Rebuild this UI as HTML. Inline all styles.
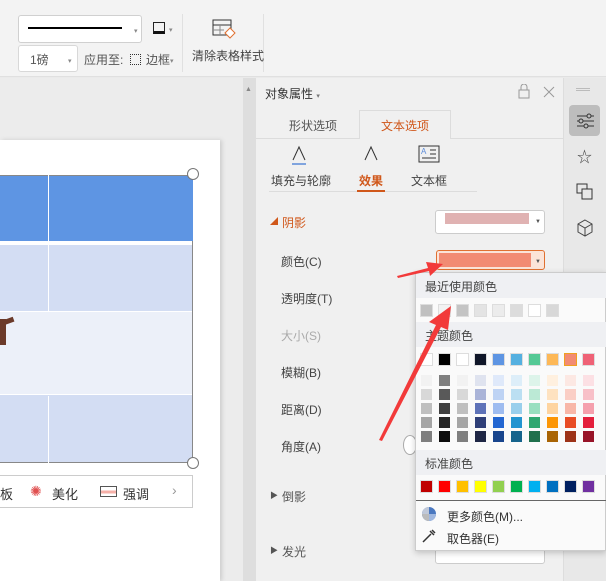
<!DOCTYPE html>
<html><head><meta charset="utf-8"><style>
*{margin:0;padding:0;box-sizing:border-box}
body{width:606px;height:581px;overflow:hidden;position:relative;background:#eaeaea;font-family:"Liberation Sans","Noto Sans CJK SC",sans-serif;font-size:12px;color:#333}
.a{position:absolute}
.sw{position:absolute;width:13px;height:13px;border:1px solid #ddd}
</style></head><body>
<div class="a" style="left:0;top:0;width:606px;height:77px;background:#f3f3f3;border-bottom:1px solid #e0e0e0"></div>
<div class="a" style="left:18px;top:15px;width:124px;height:28px;background:#fff;border:1px solid #d0d0d0;border-radius:3px"></div>
<div class="a" style="left:28px;top:27px;width:94px;height:2px;background:#000"></div>
<div class="a" style="left:134px;top:27px;font-size:7px;color:#888">▾</div>
<div class="a" style="left:153px;top:22px;width:12px;height:12px;border:1.5px solid #222;border-bottom:3px solid #111"></div>
<div class="a" style="left:169px;top:26px;font-size:7px;color:#888">▾</div>
<div class="a" style="left:18px;top:45px;width:60px;height:27px;background:#fff;border:1px solid #d8d8d8;border-radius:3px"></div>
<div class="a" style="left:30px;top:51px;color:#555">1磅</div>
<div class="a" style="left:68px;top:57px;font-size:7px;color:#888">▾</div>
<div class="a" style="left:84px;top:51px;color:#555">应用至:</div>
<div class="a" style="left:130px;top:54px;width:11px;height:11px;border:1px dotted #333"></div>
<div class="a" style="left:146px;top:51px;color:#555">边框</div>
<div class="a" style="left:170px;top:57px;font-size:7px;color:#888">▾</div>
<div class="a" style="left:182px;top:14px;width:1px;height:58px;background:#e0e0e0"></div>
<div class="a" style="left:263px;top:14px;width:1px;height:58px;background:#e0e0e0"></div>
<svg class="a" style="left:212px;top:19px" width="24" height="22"><rect x="1" y="1" width="18" height="15" fill="none" stroke="#333"/><line x1="1" y1="6" x2="19" y2="6" stroke="#333"/><line x1="1" y1="11" x2="12" y2="11" stroke="#888"/><line x1="8" y1="6" x2="8" y2="16" stroke="#888"/><path d="M13 14 L18 9 L23 14 L18 19 Z" fill="#fff" stroke="#e07030"/></svg>
<div class="a" style="left:192px;top:47px;color:#444">清除表格样式</div>
<div class="a" style="left:0;top:78px;width:243px;height:503px;background:#ececec"></div>
<div class="a" style="left:0;top:140px;width:220px;height:441px;background:#fff;box-shadow:2px 0 4px #ccc"></div>
<div class="a" style="left:0;top:175px;width:193px;height:288px;background:#d3ddf3;border:1px solid #888;border-left:none"></div>
<div class="a" style="left:0;top:175px;width:193px;height:66px;background:#5e95e3;border-top:1px solid #888"></div>
<div class="a" style="left:0;top:241px;width:192px;height:4px;background:#fff"></div>
<div class="a" style="left:0;top:311px;width:192px;height:84px;background:#ecf0f9;border-top:1px solid #fff;border-bottom:1px solid #fff"></div>
<div class="a" style="left:48px;top:175px;width:1px;height:66px;background:#fff"></div>
<div class="a" style="left:48px;top:245px;width:1px;height:66px;background:#fff"></div>
<div class="a" style="left:48px;top:396px;width:1px;height:67px;background:#fff"></div>
<div class="a" style="left:0;top:319px;width:6px;height:26px;background:#6b3a2a"></div>
<div class="a" style="left:0;top:319px;width:14px;height:5px;background:#6b3a2a;transform:rotate(-20deg)"></div>
<div class="a" style="left:187px;top:168px;width:12px;height:12px;border-radius:50%;background:#fff;border:1px solid #777"></div>
<div class="a" style="left:187px;top:457px;width:12px;height:12px;border-radius:50%;background:#fff;border:1px solid #777"></div>
<div class="a" style="left:0;top:475px;width:193px;height:33px;background:#fff;border:1px solid #ccc;border-left:none"></div>
<div class="a" style="left:0;top:484px;font-size:13px">板</div>
<div class="a" style="left:30px;top:483px;font-size:14px;color:#e05050">✺</div>
<div class="a" style="left:52px;top:484px;font-size:13px">美化</div>
<div class="a" style="left:100px;top:486px;width:17px;height:11px;border:1px solid #555;background:linear-gradient(#fff 40%,#f6b0a8 40%,#f6b0a8 70%,#fff 70%)"></div>
<div class="a" style="left:123px;top:484px;font-size:13px">强调</div>
<div class="a" style="left:172px;top:482px;font-size:14px;color:#999">›</div>
<div class="a" style="left:243px;top:78px;width:13px;height:503px;background:#dedede"></div>
<div class="a" style="left:245px;top:86px;font-size:7px;color:#888">▲</div>
<div class="a" style="left:256px;top:78px;width:307px;height:503px;background:#f0f0f0"></div>
<div class="a" style="left:265px;top:85px;color:#333">对象属性 <span style="font-size:7px;color:#777">▾</span></div>
<svg class="a" style="left:516px;top:84px" width="40" height="16"><rect x="3" y="6" width="10" height="8" fill="none" stroke="#999"/><path d="M5 6 V3 a3 3 0 0 1 6 0 V6" fill="none" stroke="#999"/><path d="M28 3 L38 13 M38 3 L28 13" stroke="#999"/></svg>
<div class="a" style="left:256px;top:138px;width:307px;height:1px;background:#dcdcdc"></div>
<div class="a" style="left:359px;top:110px;width:92px;height:29px;background:#f0f0f0;border:1px solid #dcdcdc;border-bottom:none"></div>
<div class="a" style="left:289px;top:117px;color:#555">形状选项</div>
<div class="a" style="left:381px;top:117px;color:#d0571a">文本选项</div>
<svg class="a" style="left:290px;top:145px" width="160" height="22"><path d="M3 15 L9 2 L15 15" fill="none" stroke="#333"/><line x1="2" y1="19" x2="16" y2="19" stroke="#5a8ad8" stroke-width="1.5"/><path d="M75 15 L81 2 L87 15" fill="none" stroke="#333"/><rect x="129" y="1" width="20" height="16" fill="none" stroke="#333"/><path d="M140 5H146M140 9H146M132 13H146" stroke="#333"/></svg>
<div class="a" style="left:421px;top:147px;font-size:8px;color:#5a8ad8">A</div>
<div class="a" style="left:271px;top:172px;color:#444">填充与轮廓</div>
<div class="a" style="left:359px;top:172px;color:#d0571a;font-weight:bold">效果</div>
<div class="a" style="left:411px;top:172px;color:#444">文本框</div>
<div class="a" style="left:269px;top:191px;width:208px;height:1px;background:#dcdcdc"></div>
<div class="a" style="left:357px;top:190px;width:28px;height:2px;background:#d0571a"></div>
<div class="a" style="left:270px;top:216px;font-size:8px;color:#d0571a">◢</div>
<div class="a" style="left:282px;top:214px;color:#d0571a;font-size:12px">阴影</div>
<div class="a" style="left:281px;top:253px;color:#444">颜色(C)</div>
<div class="a" style="left:281px;top:290px;color:#444">透明度(T)</div>
<div class="a" style="left:281px;top:327px;color:#aaa">大小(S)</div>
<div class="a" style="left:281px;top:364px;color:#444">模糊(B)</div>
<div class="a" style="left:281px;top:401px;color:#444">距离(D)</div>
<div class="a" style="left:281px;top:438px;color:#444">角度(A)</div>
<div class="a" style="left:270px;top:490px;font-size:8px;color:#555">▶</div>
<div class="a" style="left:282px;top:488px;color:#555">倒影</div>
<div class="a" style="left:270px;top:545px;font-size:8px;color:#555">▶</div>
<div class="a" style="left:282px;top:543px;color:#555">发光</div>
<div class="a" style="left:403px;top:435px;width:14px;height:20px;border-radius:50%;background:#fff;border:1px solid #aaa"></div>
<div class="a" style="left:435px;top:210px;width:110px;height:24px;background:#fff;border:1px solid #ccc;border-radius:3px"></div>
<div class="a" style="left:445px;top:213px;width:84px;height:11px;background:#e0b2b2"></div>
<div class="a" style="left:535px;top:219px;font-size:6px;color:#555">▼</div>
<div class="a" style="left:436px;top:250px;width:109px;height:20px;background:#fbe4d8;border:1px solid #e07030;border-radius:3px"></div>
<div class="a" style="left:439px;top:253px;width:92px;height:14px;background:#f28b73"></div>
<div class="a" style="left:535px;top:259px;font-size:6px;color:#555">▼</div>
<div class="a" style="left:435px;top:540px;width:110px;height:24px;background:#fff;border:1px solid #ccc;border-radius:3px"></div>
<div class="a" style="left:563px;top:78px;width:43px;height:503px;background:#e8e8e8;border-left:1px solid #ddd"></div>
<div class="a" style="left:576px;top:88px;width:14px;height:3px;border-top:1px solid #bbb;border-bottom:1px solid #bbb"></div>
<div class="a" style="left:569px;top:105px;width:31px;height:31px;background:#bdbdbd;border-radius:4px"></div>
<svg class="a" style="left:574px;top:110px" width="24" height="22"><path d="M3 6H20M3 11H20M3 16H20" stroke="#333"/><circle cx="15" cy="6" r="2" fill="#bdbdbd" stroke="#333"/><circle cx="7" cy="11" r="2" fill="#bdbdbd" stroke="#333"/><circle cx="12" cy="16" r="2" fill="#bdbdbd" stroke="#333"/></svg>
<div class="a" style="left:577px;top:146px;font-size:15px;color:#444">☆</div>
<svg class="a" style="left:576px;top:183px" width="18" height="18"><rect x="1" y="1" width="10" height="9" fill="none" stroke="#333"/><rect x="6" y="6" width="10" height="10" fill="#e8e8e8" stroke="#333"/></svg>
<svg class="a" style="left:577px;top:219px" width="16" height="18"><path d="M8 1 L15 5 V13 L8 17 L1 13 V5 Z M1 5 L8 9 L15 5 M8 9 V17" fill="none" stroke="#444"/></svg>
<div class="a" style="left:415px;top:272px;width:191px;height:279px;background:#fafafa;border:1px solid #ccc;box-shadow:0 2px 6px rgba(0,0,0,.2)"></div>
<div class="a" style="left:416px;top:273px;width:190px;height:25px;background:#eff0f3"></div>
<div class="a" style="left:425px;top:278px;color:#444">最近使用颜色</div>
<div class="a" style="left:416px;top:322px;width:190px;height:25px;background:#eff0f3"></div>
<div class="a" style="left:425px;top:327px;color:#444">主题颜色</div>
<div class="a" style="left:416px;top:450px;width:190px;height:25px;background:#eff0f3"></div>
<div class="a" style="left:425px;top:455px;color:#444">标准颜色</div>
<div class="a" style="left:416px;top:500px;width:190px;height:1px;background:#666"></div>
<svg class="a" style="left:421px;top:506px" width="16" height="16"><circle cx="8" cy="8" r="7" fill="#4a78c0"/><path d="M8 1 A7 7 0 0 0 1 8 H8Z" fill="#c0c8d8"/><path d="M15 8 A7 7 0 0 1 8 15 V8Z" fill="#a0b8e0"/><path d="M1 8 A7 7 0 0 0 8 15 V8Z" fill="#bbb"/></svg>
<div class="a" style="left:447px;top:508px;color:#333">更多颜色(M)...</div>
<svg class="a" style="left:421px;top:528px" width="16" height="16"><path d="M2 14 L10 6 M9 3 L13 7 M11 2 L14 5" stroke="#333" stroke-width="1.5" fill="none"/></svg>
<div class="a" style="left:447px;top:530px;color:#333">取色器(E)</div>
<div id="sw"></div>
<svg class="a" style="left:0;top:0" width="606" height="581">
<polygon points="397,276 428,268 426,262 443,264 430,276 429,271 398,278" fill="#f23a3a"/>
<polygon points="379,440 436,325 429,322 451,306 448,330 441,327 382,441" fill="#f23a3a"/>
</svg>
<script>
(function(){
var c=document.getElementById('sw'),h='';
var X=[420,438,456,474,492,510,528,546,564,582];
function s(x,y,col,b){h+='<div class="sw" style="left:'+x+'px;top:'+y+'px;background:'+col+(b?';border:1px solid '+b:'')+'"></div>';}
['#c0c0c0','#f2f2f2','#c4c4c4','#e4e4e4','#ececec','#dcdcdc','#fff','#d8d8d8'].forEach(function(col,i){s(X[i],304,col);});
var tc=['#fff','#000','#fff','#0f1628','#5e95e3','#55b0e0','#55c995','#fdb857','#f28b73','#ef6276'];
tc.forEach(function(col,i){s(X[i],353,col,i==8?'#f0a020':null);});
var shades=[
['#f2f2f2','#d8d8d8','#bfbfbf','#a5a5a5','#7f7f7f'],
['#7f7f7f','#595959','#3f3f3f','#262626','#0d0d0d'],
['#f2f2f2','#d8d8d8','#bfbfbf','#a5a5a5','#7f7f7f'],
['#dfe3ef','#aab4d8','#5e72b8','#2f3f78','#1f2745'],
['#dfe9fa','#bed3f4','#9ebcf0','#2366d1','#19458d'],
['#ddeef9','#bbdff2','#99cfec','#2294d0','#16648c'],
['#ddf4ea','#bbe9d5','#99dfc0','#2fa771','#20704c'],
['#fff0df','#fee2c0','#fed4a0','#fc9606','#a96404'],
['#fce8e3','#facec5','#f8b7a8','#e84c25','#9d3318'],
['#fce0e4','#f8c0c8','#f5a0ad','#e41f3c','#981428']];
shades.forEach(function(col,i){col.forEach(function(cc,j){s(X[i],374+j*14,cc,'#fafafa');});});
['#c00000','#ff0000','#ffc000','#ffff00','#92d050','#00b050','#00b0f0','#0070c0','#002060','#7030a0'].forEach(function(col,i){s(X[i],480,col);});
c.innerHTML=h;
})();
</script>
</body></html>
